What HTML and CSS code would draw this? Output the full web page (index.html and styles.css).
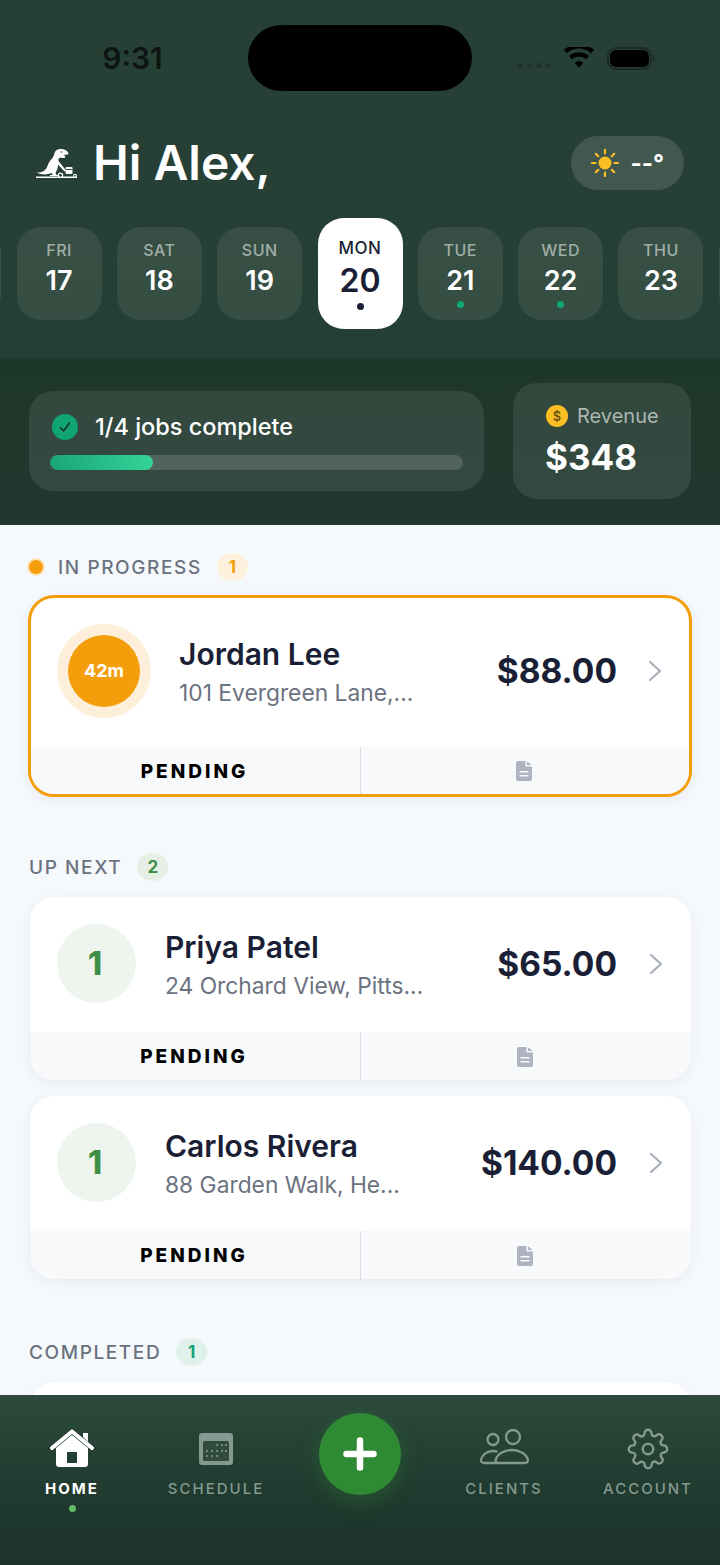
FILE: index.html
```html
<!doctype html>
<html lang="en">
<head>
<meta charset="utf-8">
<title>Home</title>
<meta name="viewport" content="width=device-width,initial-scale=1">
<link rel="stylesheet" href="styles.css">
</head>
<body>

<div class="screen">

	<header class="hero">

		<div class="status">
			<div class="time">9:31</div>
			<div class="island"></div>
			<div class="status-icons">
				<div class="signal"><i></i><i></i><i></i><i></i></div>
				<svg class="wifi" width="30" height="22" viewBox="0 0 30 22"><path d="M15 21l-4.200-5.200a6.500 6.500 0 0 1 8.400 0zM7.800 12.200l-2.700-3.300a15 15 0 0 1 19.800 0l-2.700 3.300a11 11 0 0 0-14.400 0zM2.900 6.200L0 2.900a22.500 22.500 0 0 1 30 0l-2.900 3.300a18.200 18.200 0 0 0-24.200 0z" fill="#000"/></svg>
				<div class="battery"><div class="battery-fill"></div></div>
				<div class="battery-nub"></div>
			</div>
		</div>

		<div class="greeting">
			<div class="hello">
				<svg class="logo" width="42" height="32" viewBox="0 0 42 32">
					<path d="M.5 24.500C5 25 9 23.500 11 19c1.500-4 3-7 5.500-9L18 7c.5-4 3-6 7-6 3 0 6 1.500 7.500 4l-.5 1.500-4.500.5 2 1.500-1 1.500-4.500-.2c-1.500.5-2 1.700-1.500 3.200l7.500 9.500-1.500 1-6.500-7c0 3.500-1 6.500-2.500 8l1 2.500H23v1h-9v-1h2.500l-.5-2C11 27 5 27 .5 24.500z" fill="#fff"/>
					<circle cx="25.500" cy="4" r=".8" fill="#274035"/>
					<rect x="29.500" y="19" width="7" height="7" rx="1" fill="#fff"/>
					<path d="M29.500 21.500h7" stroke="#274035" stroke-width=".9"/>
					<path d="M0 29.300h41" stroke="#fff" stroke-width="1.400"/>
					<circle cx="24.500" cy="27.200" r="2.100" fill="#274035" stroke="#fff" stroke-width="1.300"/>
					<circle cx="39" cy="27.700" r="1.400" fill="#274035" stroke="#fff" stroke-width="1.100"/>
				</svg>
				<h1>Hi Alex,</h1>
			</div>
			<div class="weather">
				<svg width="28" height="28" viewBox="0 0 28 28">
					<circle cx="14" cy="14" r="6.500" fill="#fbbf24"/>
					<path d="M14 1v3.500M14 23.500V27M1 14h3.500M23.500 14H27M4.800 4.800l2.400 2.400M20.800 20.800l2.400 2.400M4.800 23.200l2.400-2.400M20.800 7.200l2.400-2.400" stroke="#fbbf24" stroke-width="2.200" stroke-linecap="round"/>
				</svg>
				<span>--°</span>
			</div>
		</div>

		<div class="dates">
			<div class="day"></div>
			<div class="day"><small>FRI</small><b>17</b></div>
			<div class="day"><small>SAT</small><b>18</b></div>
			<div class="day"><small>SUN</small><b>19</b></div>
			<div class="day day-on"><small>MON</small><b>20</b><i></i></div>
			<div class="day"><small>TUE</small><b>21</b><i></i></div>
			<div class="day"><small>WED</small><b>22</b><i></i></div>
			<div class="day"><small>THU</small><b>23</b></div>
			<div class="day"></div>
		</div>

	</header>

	<section class="stats">

		<div class="progress">
			<div class="progress-title">
				<svg width="26" height="26" viewBox="0 0 26 26"><circle cx="13" cy="13" r="13" fill="#10a374"/><path d="M8.500 13.500l3 3.500 6-8" fill="none" stroke="#143527" stroke-width="1.600" stroke-linecap="round" stroke-linejoin="round"/></svg>
				<span>1/4 jobs complete</span>
			</div>
			<div class="bar"><div class="bar-fill" style="width:25%"></div></div>
		</div>

		<div class="revenue">
			<div class="revenue-title"><span class="coin">$</span><span>Revenue</span></div>
			<div class="revenue-sum">$348</div>
		</div>

	</section>

	<main class="list">

		<div class="head head-first">
			<span class="live-dot"></span>
			<span class="head-text">IN PROGRESS</span>
			<span class="count count-orange">1</span>
		</div>

		<div class="card card-active">
			<div class="card-main">
				<div class="timer">42m</div>
				<div class="who">
					<div class="name">Jordan Lee</div>
					<div class="addr">101 Evergreen Lane,...</div>
				</div>
				<div class="price">$88.00</div>
				<svg class="chev" width="14" height="22" viewBox="0 0 14 22"><path d="M2 2l10 9-10 9" fill="none" stroke="#a9aebb" stroke-width="2.200" stroke-linecap="round" stroke-linejoin="round"/></svg>
			</div>
			<div class="card-foot">
				<div class="pending">PENDING</div>
				<div class="doc"><svg width="16" height="20" viewBox="0 0 16 20"><path d="M2 0h7.500v5.500H16V18a2 2 0 0 1-2 2H2a2 2 0 0 1-2-2V2a2 2 0 0 1 2-2zM11 .3L15.700 4H11zM3.500 10v1.600h9V10zM3.500 14v1.600h9V14z" fill="#aeb3c2" fill-rule="evenodd"/></svg></div>
			</div>
		</div>

		<div class="head head-next">
			<span class="head-text">UP NEXT</span>
			<span class="count count-green">2</span>
		</div>

		<div class="card">
			<div class="card-main">
				<div class="num">1</div>
				<div class="who">
					<div class="name">Priya Patel</div>
					<div class="addr">24 Orchard View, Pitts...</div>
				</div>
				<div class="price">$65.00</div>
				<svg class="chev" width="14" height="22" viewBox="0 0 14 22"><path d="M2 2l10 9-10 9" fill="none" stroke="#a9aebb" stroke-width="2.200" stroke-linecap="round" stroke-linejoin="round"/></svg>
			</div>
			<div class="card-foot">
				<div class="pending">PENDING</div>
				<div class="doc"><svg width="16" height="20" viewBox="0 0 16 20"><path d="M2 0h7.500v5.500H16V18a2 2 0 0 1-2 2H2a2 2 0 0 1-2-2V2a2 2 0 0 1 2-2zM11 .3L15.700 4H11zM3.500 10v1.600h9V10zM3.500 14v1.600h9V14z" fill="#aeb3c2" fill-rule="evenodd"/></svg></div>
			</div>
		</div>

		<div class="card card-gap">
			<div class="card-main">
				<div class="num">1</div>
				<div class="who">
					<div class="name">Carlos Rivera</div>
					<div class="addr">88 Garden Walk, He...</div>
				</div>
				<div class="price">$140.00</div>
				<svg class="chev" width="14" height="22" viewBox="0 0 14 22"><path d="M2 2l10 9-10 9" fill="none" stroke="#a9aebb" stroke-width="2.200" stroke-linecap="round" stroke-linejoin="round"/></svg>
			</div>
			<div class="card-foot">
				<div class="pending">PENDING</div>
				<div class="doc"><svg width="16" height="20" viewBox="0 0 16 20"><path d="M2 0h7.500v5.500H16V18a2 2 0 0 1-2 2H2a2 2 0 0 1-2-2V2a2 2 0 0 1 2-2zM11 .3L15.700 4H11zM3.500 10v1.600h9V10zM3.500 14v1.600h9V14z" fill="#aeb3c2" fill-rule="evenodd"/></svg></div>
			</div>
		</div>

		<div class="head head-done">
			<span class="head-text">COMPLETED</span>
			<span class="count count-teal">1</span>
		</div>

		<div class="card card-cut"></div>

	</main>

	<nav class="tabs">

		<div class="tab tab-on">
			<svg width="48" height="42" viewBox="0 0 48 42">
				<path d="M35 9V5h5v9z" fill="#fff"/>
				<path d="M8 20L24 7l16 13v16a3 3 0 0 1-3 3H11a3 3 0 0 1-3-3zM19 24v11h10V24z" fill="#fff" fill-rule="evenodd"/>
				<path d="M4 20L24 3.500 44 20" fill="none" stroke="#fff" stroke-width="4" stroke-linecap="round" stroke-linejoin="round"/>
			</svg>
			<div class="tab-label">HOME</div>
			<i class="tab-dot"></i>
		</div>

		<div class="tab">
			<svg width="36" height="42" viewBox="0 0 36 42">
				<path d="M4 5h28a3 3 0 0 1 3 3v26a3 3 0 0 1-3 3H4a3 3 0 0 1-3-3V8a3 3 0 0 1 3-3z" fill="#84998f"/>
				<rect x="5" y="13" width="26" height="20" rx="1.500" fill="#2f4c3e"/>
				<g fill="#84998f">
					<circle cx="19" cy="17" r="1.100"/><circle cx="24" cy="17" r="1.100"/><circle cx="28" cy="17" r="1.100"/>
					<circle cx="9" cy="23" r="1.100"/><circle cx="14" cy="23" r="1.100"/><circle cx="19" cy="23" r="1.100"/><circle cx="24" cy="23" r="1.100"/><circle cx="28" cy="23" r="1.100"/>
					<circle cx="9" cy="28" r="1.100"/><circle cx="14" cy="28" r="1.100"/><circle cx="19" cy="28" r="1.100"/>
				</g>
			</svg>
			<div class="tab-label">SCHEDULE</div>
		</div>

		<div class="tab-add">
			<div class="fab">
				<svg width="34" height="34" viewBox="0 0 34 34"><path d="M17 3.500v27M3.500 17h27" stroke="#fff" stroke-width="6.500" stroke-linecap="round"/></svg>
			</div>
		</div>

		<div class="tab">
			<svg width="50" height="42" viewBox="0 0 50 42" fill="none" stroke="#84998f" stroke-width="2.300">
				<circle cx="14" cy="11.500" r="5.500"/>
				<circle cx="34" cy="9" r="7"/>
				<path d="M19 35H5.500C3 35 1.500 33.500 2 31.500 3.300 26.500 8 23 14 23c2 0 3 .2 4.500.8"/>
				<path d="M19.500 35c-2 0-3.300-1.500-2.700-3.500C18.500 25.500 26 22 33 22s14 3.500 15.800 9.500c.5 2-.8 3.500-2.800 3.500z"/>
			</svg>
			<div class="tab-label">CLIENTS</div>
		</div>

		<div class="tab">
			<svg width="42" height="42" viewBox="0 0 24 24" fill="none" stroke="#84998f" stroke-width="1.400" stroke-linejoin="round">
				<circle cx="12" cy="12" r="3"/>
				<path d="M19.400 15a1.650 1.650 0 0 0 .33 1.820l.06.06a2 2 0 0 1 0 2.830 2 2 0 0 1-2.830 0l-.06-.06a1.650 1.650 0 0 0-1.820-.33 1.650 1.650 0 0 0-1 1.510V21a2 2 0 0 1-2 2 2 2 0 0 1-2-2v-.09A1.650 1.650 0 0 0 9 19.400a1.650 1.650 0 0 0-1.820.33l-.06.06a2 2 0 0 1-2.830 0 2 2 0 0 1 0-2.830l.06-.06a1.650 1.650 0 0 0 .33-1.820 1.650 1.650 0 0 0-1.510-1H3a2 2 0 0 1-2-2 2 2 0 0 1 2-2h.09A1.650 1.650 0 0 0 4.600 9a1.650 1.650 0 0 0-.33-1.820l-.06-.06a2 2 0 0 1 0-2.830 2 2 0 0 1 2.830 0l.06.06a1.650 1.650 0 0 0 1.820.33H9a1.650 1.650 0 0 0 1-1.510V3a2 2 0 0 1 2-2 2 2 0 0 1 2 2v.09a1.650 1.650 0 0 0 1 1.510 1.650 1.650 0 0 0 1.820-.33l.06-.06a2 2 0 0 1 2.830 0 2 2 0 0 1 0 2.830l-.06.06a1.650 1.650 0 0 0-.33 1.820V9a1.650 1.650 0 0 0 1.510 1H21a2 2 0 0 1 2 2 2 2 0 0 1-2 2h-.09a1.650 1.650 0 0 0-1.510 1z"/>
			</svg>
			<div class="tab-label">ACCOUNT</div>
		</div>

	</nav>

</div>

</body>
</html>
```

FILE: styles.css
```css
html, body { background-color: #f6f9fc; font-family: Inter, "Liberation Sans", sans-serif; margin: 0; }

.screen { display: flex; flex-direction: column; height: 1565px; overflow: hidden; width: 720px; }

/* top of the page */

.hero { background: linear-gradient( 180deg, #274035 0%, #264035 55%, #243f33 100% ); box-sizing: border-box; flex: none; height: 358px; padding-top: 25px; }

.status { display: grid; grid-template-columns: 248px 224px 248px; height: 66px; }
.time { color: #0d1512; font-size: 30px; font-weight: 600; line-height: 66px; padding-left: 17px; text-align: center; }
.island { background-color: #000; border-radius: 33px; }
.status-icons { align-items: center; display: flex; padding-left: 45px; }
.signal { display: flex; gap: 4px; margin: 15px 13px 0 0; opacity: .2; }
.signal i { background-color: #000; border-radius: 2px; height: 5px; width: 5.500px; }
.wifi { margin-right: 13px; }
.battery { border: 2px solid #1a2c24; border-radius: 9px; box-sizing: border-box; height: 23px; padding: 1px; width: 45px; }
.battery-fill { background-color: #000; border-radius: 6px; height: 100%; }
.battery-nub { background-color: #1a2c24; border-radius: 0 2px 2px 0; height: 7px; margin-left: 1px; width: 2px; }

.greeting { align-items: center; display: flex; height: 54px; justify-content: space-between; margin-top: 45px; padding: 0 36px; }
.hello { align-items: center; display: flex; gap: 15px; }
.hello h1 { color: #fff; font-size: 48px; font-weight: 600; line-height: 54px; margin: 0; }
.logo { margin-top: 2px; }
.weather { align-items: center; background-color: rgba( 255, 255, 255, .13 ); border-radius: 27px; color: #fff; display: flex; font-size: 24px; font-weight: 700; gap: 12px; height: 54px; padding: 0 20px; }

.dates { align-items: center; display: flex; gap: 15.300px; height: 111px; justify-content: center; margin-top: 28px; width: 720px; }
.day { align-items: center; background-color: rgba( 255, 255, 255, .08 ); border-radius: 24px; box-sizing: border-box; display: flex; flex: none; flex-direction: column; height: 93px; padding-top: 13px; width: 85px; }
.day small { color: rgba( 255, 255, 255, .55 ); font-size: 16px; font-weight: 500; letter-spacing: .5px; line-height: 21px; }
.day b { color: #fff; font-size: 27px; font-weight: 600; line-height: 38px; margin-top: 1px; }
.day i { background-color: #10a872; border-radius: 50%; height: 7px; margin-top: 1px; width: 7px; }
.day-on { background-color: #fff; border-radius: 26px; height: 111px; padding-top: 20px; }
.day-on small { color: #1a1f36; font-size: 17px; }
.day-on b { color: #1a1f36; font-size: 32px; margin-top: 3px; }
.day-on i { background-color: #1a1f36; margin-top: 3px; }

.stats { align-items: center; background: linear-gradient( 180deg, #1e372b 0%, #20382d 100% ); box-sizing: border-box; display: flex; flex: none; gap: 29px; height: 167px; padding: 0 29px 2px; }
.progress { background-color: rgba( 255, 255, 255, .09 ); border-radius: 24px; box-sizing: border-box; flex: 1; height: 100px; padding: 23px 21px 0; }
.progress-title { align-items: center; color: #fff; display: flex; font-size: 23.500px; font-weight: 500; gap: 17px; height: 26px; margin-left: 2px; }
.bar { background-color: rgba( 255, 255, 255, .15 ); border-radius: 8px; height: 15px; margin-top: 15px; overflow: hidden; }
.bar-fill { background: linear-gradient( 90deg, #1aa578, #34d399 ); border-radius: 8px; height: 100%; }
.revenue { background-color: rgba( 255, 255, 255, .09 ); border-radius: 24px; box-sizing: border-box; flex: none; height: 116px; padding: 22px 0 0 33px; width: 178px; }
.revenue-title { align-items: center; color: rgba( 255, 255, 255, .6 ); display: flex; font-size: 20px; gap: 9px; height: 22px; }
.coin { background-color: #fbbf24; border-radius: 50%; color: #5f4a10; font-size: 13px; font-weight: 500; height: 22px; line-height: 22px; text-align: center; width: 22px; }
.revenue-sum { color: #fff; font-size: 35px; font-weight: 700; line-height: 44px; margin: 8px 0 0 -1px; }

/* job list */

.list { flex: 1; min-height: 0; overflow: hidden; padding: 28px 29px 0 30px; }

.head { align-items: center; display: flex; height: 28px; margin-left: -1px; }
.head-first { margin-bottom: 14px; }
.head-next { margin-bottom: 16px; margin-top: 56px; }
.head-done { margin-bottom: 16px; margin-top: 59px; }
.head-text { color: #6b7280; font-size: 19px; font-weight: 500; letter-spacing: 1.600px; }
.live-dot { background-color: #f59e0b; border-radius: 50%; box-shadow: 0 0 0 2px #fde3b8; height: 14px; margin: 0 15px 0 0; width: 14px; }
.count { border-radius: 50%; font-size: 17px; font-weight: 700; height: 28px; line-height: 28px; margin-left: 15px; text-align: center; width: 31px; }
.count-orange { background-color: #fdf0dc; color: #f59e0b; }
.count-green { background-color: #e6efe6; color: #3f8f47; }
.count-teal { background-color: #dff1ea; color: #10a374; }

.card { background-color: #fff; border-radius: 24px; box-shadow: 0 3px 12px rgba( 30, 45, 70, .07 ); overflow: hidden; }
.card-gap { margin-top: 16px; }
.card-active { border: 3px solid #f59e0b; border-radius: 26px; margin: 0 -1px 0 -2px; }
.card-cut { height: 100px; }
.card-main { align-items: center; display: flex; padding: 27px 28px 29px 27px; }
.card-active .card-main { padding: 26px 27px 29px 26px; }

.timer { background-color: #f59e0b; border-radius: 50%; box-shadow: 0 0 0 11px #fdefd9; color: #fff; flex: none; font-size: 18px; font-weight: 700; height: 72px; line-height: 72px; margin: 11px 39px 11px 11px; text-align: center; width: 72px; }
.num { background-color: #eef4ee; border-radius: 50%; box-sizing: border-box; color: #3f8f47; flex: none; font-size: 32px; font-weight: 800; height: 79px; line-height: 79px; margin-right: 29px; padding-right: 3px; text-align: center; width: 79px; }
.who { flex: 1; margin-top: 2px; min-width: 0; }
.name { color: #1a1f36; font-size: 30px; font-weight: 600; line-height: 36px; white-space: nowrap; }
.addr { color: #6b7280; font-size: 22.800px; line-height: 30px; margin-top: 6px; white-space: nowrap; }
.price { color: #1a1f36; font-size: 33.500px; font-weight: 700; margin-right: 32px; white-space: nowrap; }
.card-active .price { margin-right: 31px; }
.chev { flex: none; }

.card-foot { background-color: #f7f9fb; display: flex; height: 48px; }
.card-active .card-foot { height: 47px; padding-top: 0; }
.pending { align-items: center; border-right: 1px solid #d9dde3; box-sizing: border-box; color: #000; display: flex; font-size: 19px; font-weight: 800; justify-content: center; letter-spacing: 3px; padding-right: 2px; width: 331px; }
.card-active .pending { padding-top: 2px; width: 330px; }
.doc { align-items: center; display: flex; flex: 1; justify-content: center; padding: 1px 3px 0 0; }

/* bottom bar */

.tabs { background: linear-gradient( 180deg, #2d4a3c 0%, #213c30 50%, #1c332a 100% ); box-sizing: border-box; display: grid; flex: none; grid-template-columns: repeat( 5, 144px ); height: 170px; padding-top: 18px; }
.tab { align-items: center; display: flex; flex-direction: column; padding-top: 15px; }
.tab-label { color: #84998f; font-size: 15px; font-weight: 500; letter-spacing: 2px; line-height: 20px; margin-top: 9px; }
.tab-on .tab-label { color: #fff; font-weight: 700; }
.tab-dot { background-color: #66bb6a; border-radius: 50%; height: 7px; margin-top: 6px; width: 7px; }
.tab-add { display: flex; justify-content: center; }
.fab { align-items: center; background-color: #2e8b33; border-radius: 50%; box-shadow: 0 6px 20px rgba( 46, 139, 51, .35 ); display: flex; height: 82px; justify-content: center; width: 82px; }
```
